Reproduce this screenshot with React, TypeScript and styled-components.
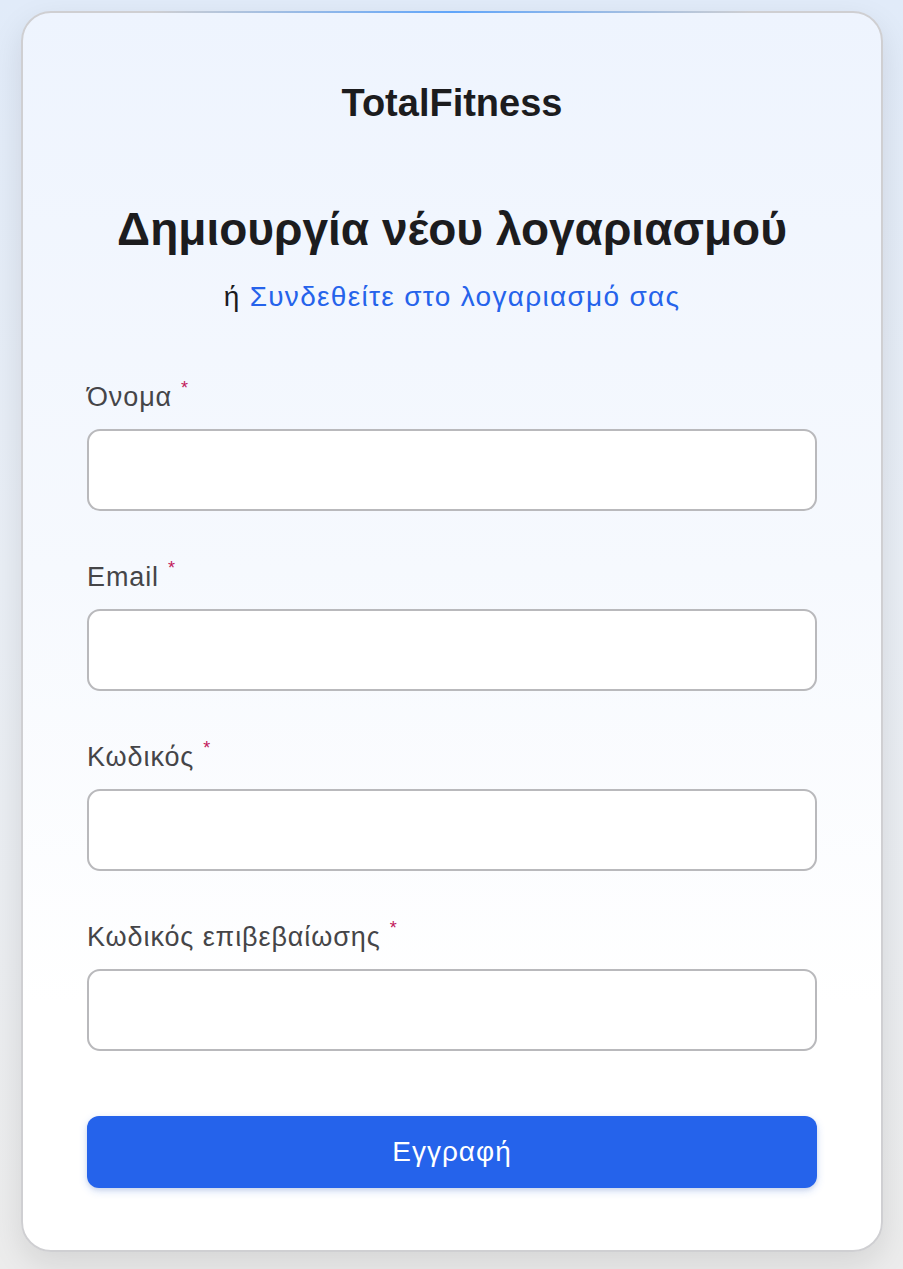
import React from "react";
import styled, { createGlobalStyle } from "styled-components";

const GlobalStyle = createGlobalStyle`
  html, body {
    margin: 0;
    padding: 0;
  }
  body {
    font-family: "Liberation Sans", Arial, sans-serif;
    background: linear-gradient(to bottom, #e1ebf9 0%, #e9eef5 45%, #ececec 100%);
    min-height: 1269px;
  }
  * {
    box-sizing: border-box;
  }
`;

interface FieldProps {
  label: string;
  type?: string;
}

const Field: React.FC<FieldProps> = ({ label, type = "text" }) => {
  return (
    <StyledField>
      <StyledLabel>
        {label}
        <StyledRequired>*</StyledRequired>
      </StyledLabel>
      <StyledInput type={type} />
    </StyledField>
  );
};

const App: React.FC = () => {
  return (
    <>
      <GlobalStyle />
      <StyledPage>
        <StyledCard>
          <StyledBrand>TotalFitness</StyledBrand>
          <StyledHeading>Δημιουργία νέου λογαριασμού</StyledHeading>
          <StyledSubtext>
            ή <StyledLink href="#">Συνδεθείτε στο λογαριασμό σας</StyledLink>
          </StyledSubtext>
          <StyledForm onSubmit={(e) => e.preventDefault()}>
            <Field label="Όνομα" />
            <Field label="Email" type="email" />
            <Field label="Κωδικός" type="password" />
            <Field label="Κωδικός επιβεβαίωσης" type="password" />
            <StyledButton type="submit">Εγγραφή</StyledButton>
          </StyledForm>
        </StyledCard>
      </StyledPage>
    </>
  );
};

const StyledPage = styled.div`
  padding: 11px 20px 17px 21px;
`;

const StyledCard = styled.div`
  position: relative;
  display: flex;
  flex-direction: column;
  padding: 68px 64px 62px;
  border: 2px solid #cfcfd2;
  border-radius: 30px;
  background: linear-gradient(to bottom, #eef4fe 0%, #f6f9fe 45%, #ffffff 80%);
  box-shadow: 0 12px 32px rgba(0, 0, 0, 0.1);

  &::before {
    content: "";
    position: absolute;
    top: -2px;
    left: 15%;
    right: 15%;
    height: 2px;
    background: linear-gradient(
      to right,
      rgba(96, 165, 250, 0),
      #60a5fa 50%,
      rgba(96, 165, 250, 0)
    );
  }
`;

const StyledBrand = styled.div`
  text-align: center;
  font-size: 38px;
  line-height: 44px;
  font-weight: 700;
  color: #1c1c1e;
`;

const StyledHeading = styled.h1`
  margin: 78px 0 0;
  text-align: center;
  font-size: 46px;
  line-height: 52px;
  font-weight: 700;
  color: #1c1c1e;
`;

const StyledSubtext = styled.p`
  margin: 24px 0 0;
  text-align: center;
  font-size: 28px;
  line-height: 36px;
  letter-spacing: 1.3px;
  color: #1c1c1e;
`;

const StyledLink = styled.a`
  color: #2563eb;
  text-decoration: none;
`;

const StyledForm = styled.form`
  display: flex;
  flex-direction: column;
  gap: 50px;
  margin-top: 66px;
`;

const StyledField = styled.div`
  display: flex;
  flex-direction: column;
  gap: 16px;
`;

const StyledLabel = styled.label`
  font-size: 27px;
  line-height: 32px;
  letter-spacing: 0.9px;
  color: #454548;
`;

const StyledRequired = styled.span`
  margin-left: 9px;
  font-size: 18px;
  line-height: 0;
  vertical-align: 12px;
  color: #c2185b;
`;

const StyledInput = styled.input`
  height: 82px;
  padding: 0 20px;
  border: 2px solid #b9b9bc;
  border-radius: 13px;
  background: #ffffff;
  font-family: inherit;
  font-size: 26px;
  outline: none;
`;

const StyledButton = styled.button`
  margin-top: 15px;
  height: 72px;
  border: none;
  border-radius: 12px;
  background: #2563eb;
  color: #ffffff;
  font-family: inherit;
  font-size: 28px;
  letter-spacing: 1px;
  box-shadow: 0 3px 8px rgba(37, 99, 235, 0.2), 0 2px 4px rgba(0, 0, 0, 0.08);
  cursor: pointer;
`;

export default App;
